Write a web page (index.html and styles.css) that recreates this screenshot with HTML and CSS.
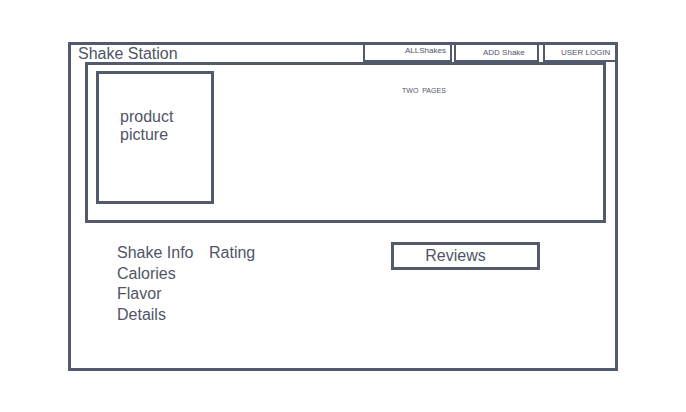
FILE: index.html
```html
<!DOCTYPE html>
<html lang="en">
  <head>
    <meta charset="UTF-8" />
    <meta name="viewport" content="width=device-width, initial-scale=1.0" />
    <title>Shake Station</title>
    <link rel="stylesheet" href="styles.css">
  </head>
  <body>
    <div class="frame">
      <div class="header">
        <h1 class="title">Shake Station</h1>
        <nav class="nav">
          <a class="navBtn allShakes">ALLShakes</a>
          <a class="navBtn addShake">ADD Shake</a>
          <a class="navBtn login">USER LOGIN</a>
        </nav>
      </div>

      <div class="hero">
        <div class="picture">product<br />picture</div>
        <div class="pages">TWO &nbsp;PAGES</div>
      </div>

      <div class="details">
        <div class="info">
          <span>Shake Info</span>
          <span>Rating</span>
          <span>Calories</span>
          <span></span>
          <span>Flavor</span>
          <span></span>
          <span>Details</span>
        </div>
        <div class="reviews">Reviews</div>
      </div>
    </div>
  </body>
</html>
```

FILE: styles.css
```css
* {
  margin: 0;
  box-sizing: border-box;
  font-family: "Liberation Sans", Arial, sans-serif;
}

body {
  background: #fff;
  padding: 42px 0 0 68px;
  color: #4f5567;
}

.frame {
  width: 550px;
  height: 329px;
  border: 3px solid #535a6e;
  display: flex;
  flex-direction: column;
}

.header {
  display: flex;
  justify-content: space-between;
  height: 17px;
}

.title {
  font-size: 16px;
  font-weight: 400;
  line-height: 17px;
  padding-left: 7px;
}

.nav {
  display: flex;
  margin-top: -2px;
}

.navBtn {
  display: flex;
  align-items: center;
  height: 19px;
  border: 2px solid #535a6e;
  font-size: 8px;
  color: #4f5567;
  cursor: pointer;
}

.allShakes {
  width: 89px;
  padding-left: 40px;
  align-items: flex-start;
  padding-top: 1px;
  margin-right: 2px;
}

.addShake {
  width: 85px;
  padding-left: 27px;
  margin-right: 4px;
}

.login {
  width: 72px;
  padding-left: 16px;
  border-right: none;
}

.hero {
  display: flex;
  align-items: flex-start;
  margin-left: 14px;
  width: 521px;
  height: 161px;
  border: 3px solid #535a6e;
  padding: 6px 8px;
}

.picture {
  width: 118px;
  height: 133px;
  border: 3px solid #535a6e;
  padding: 34px 0 0 21px;
  font-size: 16px;
  line-height: 18px;
}

.pages {
  margin: 16px 0 0 188px;
  font-size: 7px;
}

.details {
  display: flex;
  align-items: flex-start;
  padding: 20px 0 0 46px;
}

.info {
  display: grid;
  grid-template-columns: 92px auto;
  font-size: 16px;
  line-height: 20.7px;
}

.reviews {
  margin: -1px 0 0 136px;
  width: 149px;
  height: 28px;
  border: 3px solid #535a6e;
  padding-left: 31px;
  font-size: 16px;
  line-height: 22px;
}
```
